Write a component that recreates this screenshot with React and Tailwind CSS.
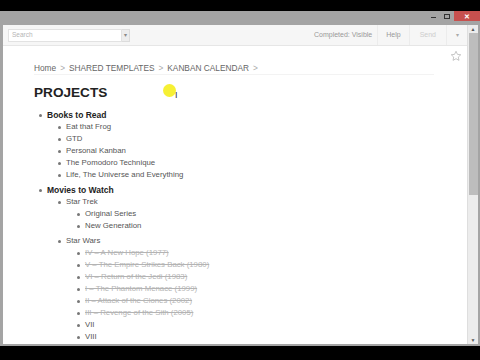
import React from 'react';

const books = ['Eat that Frog', 'GTD', 'Personal Kanban', 'The Pomodoro Technique', 'Life, The Universe and Everything'];

const starWars = [
  { t: 'IV – A New Hope (1977)', done: true },
  { t: 'V – The Empire Strikes Back (1980)', done: true },
  { t: 'VI – Return of the Jedi (1983)', done: true },
  { t: 'I – The Phantom Menace (1999)', done: true },
  { t: 'II – Attack of the Clones (2002)', done: true },
  { t: 'III – Revenge of the Sith (2005)', done: true },
  { t: 'VII' },
  { t: 'VIII' },
  { t: 'IX' },
];

function Item({ children, bold, done, indent }) {
  return (
    <li className={`flex items-center h-[12px] ${indent}`}>
      <span className="w-[3px] h-[3px] rounded-full bg-[#777] mr-[5px] shrink-0" />
      <span
        className={
          bold
            ? 'text-[8.5px] font-bold text-[#222]'
            : done
            ? 'text-[7.8px] text-[#b4b4b4] line-through'
            : 'text-[7.8px] text-[#555]'
        }
      >
        {children}
      </span>
    </li>
  );
}

export default function App() {
  return (
    <div className="w-[480px] h-[360px] bg-black flex flex-col overflow-hidden" style={{ fontFamily: '"Liberation Sans", Arial, sans-serif' }}>
      <div className="h-[11px] shrink-0" />
      <div className="h-[335px] bg-[#a4a4a4] flex flex-col shrink-0">
        {/* title bar */}
        <div className="h-[14px] flex justify-end items-start shrink-0">
          <div className="w-[14px] h-[10px] flex items-center justify-center">
            <span className="w-[5px] h-[1px] bg-[#333] mt-[3px]" />
          </div>
          <div className="w-[14px] h-[10px] flex items-center justify-center">
            <span className="w-[6px] h-[5px] border border-[#333]" />
          </div>
          <div className="w-[26px] h-[10px] bg-[#c7504e] flex items-center justify-center text-white text-[7px] font-bold leading-none">
            ✕
          </div>
        </div>
        {/* window body */}
        <div className="flex flex-1 min-h-0 pl-[3px] pr-[2px]">
          <div className="flex-1 flex flex-col min-w-0 bg-white">
            {/* toolbar */}
            <div className="h-[21px] bg-[#f6f6f6] border-b border-[#e6e6e6] flex items-center shrink-0">
              <div className="ml-[5px] w-[114px] h-[13px] bg-white border border-[#e2e2e2] flex items-center px-[3px] text-[6.5px] text-[#b5b5b5]">
                Search
              </div>
              <div className="w-[8px] h-[13px] bg-[#ededed] border border-[#dcdcdc] border-l-0 flex items-center justify-center text-[6px] text-[#888]">
                ▾
              </div>
              <div className="flex-1" />
              <div className="h-full flex items-center px-[5px] text-[7px] text-[#999] border-r border-[#ececec]">Completed: Visible</div>
              <div className="h-full flex items-center px-[8px] text-[7px] text-[#999] border-r border-[#ececec]">Help</div>
              <div className="h-full flex items-center px-[10px] text-[7px] text-[#cdcdcd] border-r border-[#ececec]">Send</div>
              <div className="h-full w-[20px] flex items-center justify-center text-[6px] text-[#aaa]">▾</div>
            </div>
            {/* content */}
            <div className="flex-1 min-h-0 overflow-hidden relative pl-[31px] pt-[17px]">
              <svg className="absolute right-[5px] top-[4px]" width="12" height="12" viewBox="0 0 24 24" fill="none" stroke="#b8b8b8" strokeWidth="1.6">
                <path d="M12 2.5l2.9 6.2 6.6.8-4.9 4.6 1.3 6.6L12 17.4l-5.9 3.3 1.3-6.6-4.9-4.6 6.6-.8z" />
              </svg>
              <div className="flex items-center gap-[4px] text-[8.3px] text-[#666] h-[12px] leading-none border-b border-[#f3f3f3] w-[400px]">
                <span>Home</span><span className="text-[#aaa]">&gt;</span>
                <span>SHARED TEMPLATES</span><span className="text-[#aaa]">&gt;</span>
                <span>KANBAN CALENDAR</span><span className="text-[#aaa]">&gt;</span>
              </div>
              <div className="relative">
                <h1 className="text-[13.6px] font-bold text-[#222] mt-[11px] leading-[14px]">PROJECTS</h1>
                <span className="absolute left-[129px] top-[-2px] w-[13px] h-[13px] rounded-full bg-[#f5ee1e] opacity-90" />
                <span className="absolute left-[141px] top-[5px] text-[9px] text-[#333] leading-none">I</span>
              </div>
              <ul className="mt-[9px]">
                <Item bold indent="pl-[5px]">Books to Read</Item>
                <ul className="mb-[3px]">
                  {books.map((b) => (
                    <Item key={b} indent="pl-[24px]">{b}</Item>
                  ))}
                </ul>
                <Item bold indent="pl-[5px]">Movies to Watch</Item>
                <ul>
                  <Item indent="pl-[24px]">Star Trek</Item>
                  <ul className="mb-[3px]">
                    <Item indent="pl-[43px]">Original Series</Item>
                    <Item indent="pl-[43px]">New Generation</Item>
                  </ul>
                  <Item indent="pl-[24px]">Star Wars</Item>
                  <ul>
                    {starWars.map((s) => (
                      <Item key={s.t} done={s.done} indent="pl-[43px]">{s.t}</Item>
                    ))}
                  </ul>
                </ul>
              </ul>
            </div>
          </div>
          {/* scrollbar */}
          <div className="w-[11px] bg-[#ececec] flex flex-col items-center shrink-0 border-l border-[#dedede]">
            <span className="text-[5px] text-[#555] h-[8px] leading-[8px]">▲</span>
            <div className="w-[9px] h-[162px] bg-[#bdbdbd]" />
            <div className="flex-1" />
            <span className="text-[5px] text-[#555] h-[8px] leading-[8px]">▼</span>
          </div>
        </div>
        <div className="h-[2px] shrink-0" />
      </div>
    </div>
  );
}
